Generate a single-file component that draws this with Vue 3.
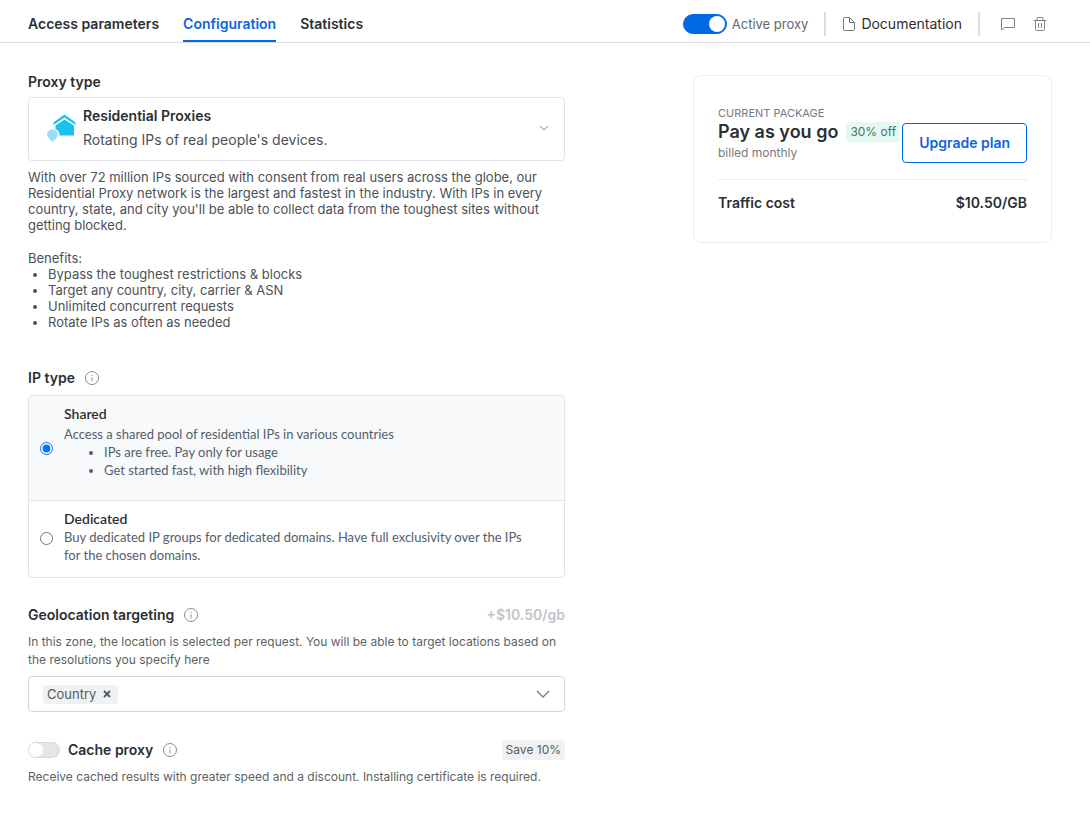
<script setup>
import { ref } from 'vue'

const tabs = ['Access parameters', 'Configuration', 'Statistics']
const activeTab = ref('Configuration')
const activeProxy = ref(true)
const cacheProxy = ref(false)
const ipType = ref('shared')
const targets = ref(['Country'])
const benefits = [
  'Bypass the toughest restrictions & blocks',
  'Target any country, city, carrier & ASN',
  'Unlimited concurrent requests',
  'Rotate IPs as often as needed',
]
const removeTarget = (name) => {
  targets.value = targets.value.filter((t) => t !== name)
}
</script>

<template>
  <div class="page">
    <header class="topbar">
      <nav class="tabs">
        <a
          v-for="tab in tabs"
          :key="tab"
          href="#"
          class="tab"
          :class="{ active: tab === activeTab }"
          @click.prevent="activeTab = tab"
        >{{ tab }}</a>
      </nav>
      <div class="tools">
        <label class="active-proxy">
          <input v-model="activeProxy" type="checkbox" role="switch" class="switch large" />
          <span>Active proxy</span>
        </label>
        <span class="divider"></span>
        <a href="#" class="docs">
          <svg width="14" height="16" viewBox="0 0 14 16" fill="none" stroke="#6f7780" stroke-linejoin="round">
            <path d="M1.5 2.5a1 1 0 0 1 1-1h5l5 5v7a1 1 0 0 1-1 1h-9a1 1 0 0 1-1-1z" />
            <path d="M7.5 1.5v5h5" />
          </svg>
          <span>Documentation</span>
        </a>
        <span class="divider"></span>
        <button type="button" class="icon-button" aria-label="Comment">
          <svg width="16" height="16" viewBox="0 0 16 16" fill="none" stroke="#7b838b" stroke-linejoin="round">
            <path d="M1.5 2.5h13v9h-10l-3 2.5z" />
          </svg>
        </button>
        <button type="button" class="icon-button" aria-label="Delete">
          <svg width="16" height="16" viewBox="0 0 16 16" fill="none" stroke="#7b838b" stroke-linecap="round" stroke-linejoin="round">
            <path d="M2 4.5h12M5 4.5v-2a1 1 0 0 1 1-1h4a1 1 0 0 1 1 1v2M3.5 4.5v9a1 1 0 0 0 1 1h7a1 1 0 0 0 1-1v-9M6.5 7.5v4M9.5 7.5v4" />
          </svg>
        </button>
      </div>
    </header>

    <main class="content">
      <div class="settings">
        <section class="proxy-type">
          <h2 id="proxy-type-title">Proxy type</h2>
          <button type="button" class="proxy-select" aria-haspopup="listbox" aria-labelledby="proxy-type-title">
            <svg class="house" width="30" height="30" viewBox="0 0 30 30">
              <path d="M6.5 9.5 17.5 1.5l11 8V12L17.5 4.5 6.5 12z" fill="#18c2ec" />
              <path d="M8.5 12.5l9-6 9.5 6v10H8.5z" fill="#18c2ec" />
              <path d="M5.5 15.5c4 0 7 2.5 7 6.5 0 3-2.5 4.5-7 9-4.5-4.5-7-6-7-9 0-4 3-6.5 7-6.5z" fill="#fff" />
              <path d="M5.5 16.5c3 0 5.500 2 5.500 5 0 2.500-2.500 4.500-5.500 7.500-3-3-5.500-5-5.500-7.500 0-3 2.500-5 5.500-5z" fill="#96dff6" />
            </svg>
            <span class="proxy-text">
              <strong>Residential Proxies</strong>
              <span>Rotating IPs of real people's devices.</span>
            </span>
            <svg width="10" height="6" viewBox="0 0 10 6" fill="none" stroke="#80868d">
              <path d="m1 1 4 4 4-4" />
            </svg>
          </button>
          <div class="description">
            <p>
              With over 72 million IPs sourced with consent from real users across the globe, our
              Residential Proxy network is the largest and fastest in the industry. With IPs in every
              country, state, and city you'll be able to collect data from the toughest sites without
              getting blocked.
            </p>
            <p class="benefits">Benefits:</p>
            <ul>
              <li v-for="item in benefits" :key="item">{{ item }}</li>
            </ul>
          </div>
        </section>

        <section class="ip-type">
          <div class="heading">
            <h2>IP type</h2>
            <svg class="info" width="14" height="14" viewBox="0 0 14 14" fill="none" stroke="#858c93">
              <circle cx="7" cy="7" r="6.5" />
              <path d="M7 6.3v4M7 3.8V5" />
            </svg>
          </div>
          <div class="options" role="radiogroup" aria-label="IP type">
            <label class="option shared" :class="{ selected: ipType === 'shared' }">
              <input v-model="ipType" type="radio" name="ip-type" value="shared" />
              <div>
                <strong>Shared</strong>
                <p>Access a shared pool of residential IPs in various countries</p>
                <ul>
                  <li>IPs are free. Pay only for usage</li>
                  <li>Get started fast, with high flexibility</li>
                </ul>
              </div>
            </label>
            <label class="option dedicated" :class="{ selected: ipType === 'dedicated' }">
              <input v-model="ipType" type="radio" name="ip-type" value="dedicated" />
              <div>
                <strong>Dedicated</strong>
                <p>Buy dedicated IP groups for dedicated domains. Have full exclusivity over the IPs for the chosen domains.</p>
              </div>
            </label>
          </div>
        </section>

        <section class="geo">
          <div class="heading">
            <h2>Geolocation targeting</h2>
            <svg class="info" width="14" height="14" viewBox="0 0 14 14" fill="none" stroke="#858c93">
              <circle cx="7" cy="7" r="6.5" />
              <path d="M7 6.3v4M7 3.8V5" />
            </svg>
            <span class="price">+$10.50/gb</span>
          </div>
          <p class="note">
            In this zone, the location is selected per request. You will be able to target locations based on
            the resolutions you specify here
          </p>
          <div class="target-select">
            <span v-for="target in targets" :key="target" class="chip">
              {{ target }}
              <button type="button" :aria-label="`Remove ${target}`" @click="removeTarget(target)">
                <svg width="8" height="8" viewBox="0 0 8 8" stroke="#545b61" stroke-width="1.8">
                  <path d="m1 1 6 6M7 1 1 7" />
                </svg>
              </button>
            </span>
            <button type="button" class="open" aria-label="Choose targeting" aria-haspopup="listbox">
              <svg width="14" height="8" viewBox="0 0 14 8" fill="none" stroke="#747c84" stroke-width="1.3">
                <path d="m1 1 6 6 6-6" />
              </svg>
            </button>
          </div>
        </section>

        <section class="cache">
          <div class="heading">
            <label class="cache-label">
              <input v-model="cacheProxy" type="checkbox" role="switch" class="switch small" />
              <span>Cache proxy</span>
            </label>
            <svg class="info" width="14" height="14" viewBox="0 0 14 14" fill="none" stroke="#858c93">
              <circle cx="7" cy="7" r="6.5" />
              <path d="M7 6.3v4M7 3.8V5" />
            </svg>
            <span class="save">Save 10%</span>
          </div>
          <p class="note">Receive cached results with greater speed and a discount. Installing certificate is required.</p>
        </section>
      </div>

      <aside class="package">
        <div class="plan">
          <div class="plan-text">
            <p class="caption">CURRENT PACKAGE</p>
            <div class="plan-name">
              <strong>Pay as you go</strong>
              <span class="discount">30% off</span>
            </div>
            <p class="billing">billed monthly</p>
          </div>
          <button type="button" class="upgrade">Upgrade plan</button>
        </div>
        <div class="cost">
          <span>Traffic cost</span>
          <span>$10.50/GB</span>
        </div>
      </aside>
    </main>
  </div>
</template>

<style>
body {
  background: #fff;
}
</style>

<style scoped>
.page,
.page * {
  box-sizing: border-box;
}

.page {
  color: #2b2f33;
  font-family: Inter, "Liberation Sans", sans-serif;
  font-size: 14px;
  line-height: 20px;
}

p,
h2,
ul {
  margin: 0;
}

button {
  font: inherit;
  color: inherit;
  padding: 0;
  border: 0;
  background: none;
  cursor: pointer;
}

a {
  color: inherit;
  text-decoration: none;
}

svg {
  display: block;
  flex: none;
}

strong,
h2 {
  font-size: 14px;
  font-weight: 600;
}

.topbar {
  display: flex;
  justify-content: space-between;
  height: 43px;
  padding: 0 42px 0 28px;
  border-bottom: 1px solid #dcdee0;
}

.tabs {
  display: flex;
  gap: 24px;
}

.tab {
  padding-top: 14px;
  border-bottom: 2px solid transparent;
  font-weight: 600;
}

.tab.active {
  color: #0b66de;
  border-color: #0068e0;
}

.tools {
  display: flex;
  align-items: center;
  padding-top: 5px;
}

.active-proxy {
  display: flex;
  align-items: center;
  gap: 5px;
  color: #5f6870;
  font-size: 13px;
}

.divider {
  width: 2px;
  height: 24px;
  margin: 0 16px;
  background: #dcdee1;
}

.docs {
  display: flex;
  align-items: center;
  gap: 5px;
}

.icon-button {
  margin-left: 16px;
}

.divider + .icon-button {
  margin-left: 4px;
}

.switch {
  appearance: none;
  display: flex;
  align-items: center;
  flex: none;
  margin: 0;
  border-radius: 10px;
  background: #e4e5e9;
  border: 1px solid #d7d9dd;
}

.switch::before {
  content: "";
  height: 100%;
  aspect-ratio: 1;
  border-radius: 50%;
  background: #fff;
}

.switch:checked {
  justify-content: flex-end;
  background: #0068e0;
  border-color: #0068e0;
}

.switch.large {
  width: 44px;
  height: 20px;
  padding: 1px;
}

.switch.small {
  width: 32px;
  height: 16px;
}

.content {
  display: grid;
  grid-template-columns: minmax(0, 1fr) 359px;
  gap: 128px;
  align-items: start;
  padding: 32px 38px 28px 28px;
}

.proxy-type h2 {
  padding-bottom: 8px;
  line-height: 14px;
}

.proxy-select {
  display: flex;
  align-items: center;
  width: 100%;
  height: 64px;
  padding: 0 15px 2px 18px;
  border: 1px solid #dfe2eb;
  border-radius: 4px;
  text-align: left;
}

.proxy-text {
  flex: 1;
  padding-left: 6px;
  color: #4b5156;
  line-height: 24px;
}

.proxy-text strong {
  color: #2b2f33;
}

.proxy-text > * {
  display: block;
}

.description {
  padding-top: 8px;
  color: #4b5156;
  font-size: 13px;
  line-height: 16px;
}

.benefits {
  padding-top: 17px;
}

.description ul {
  padding-left: 20px;
}

.ip-type {
  padding-top: 38px;
}

.heading {
  display: flex;
  align-items: center;
}

.heading .info {
  margin-left: 10px;
}

.options {
  margin-top: 7px;
  border: 1px solid #dfe2eb;
  border-radius: 4px;
  overflow: hidden;
  color: #535e6c;
  font-family: Lato, "Liberation Sans", sans-serif;
  font-size: 13px;
  line-height: 18px;
}

.option {
  display: flex;
  align-items: center;
  gap: 11px;
  padding: 9px 28px 9px 11px;
}

.option strong {
  display: block;
  color: #2b2f33;
}

.option input {
  flex: none;
  width: 13px;
  height: 13px;
  margin: 0;
  accent-color: #0075ff;
}

.option ul {
  padding: 0 0 12px 40px;
}

.shared p {
  padding-top: 2px;
}

.dedicated {
  padding-bottom: 11px;
  border-top: 1px solid #dfe2eb;
}

.dedicated p {
  padding-bottom: 2px;
}

.selected {
  background: #f8f9fb;
}

.geo {
  padding-top: 27px;
}

.price {
  margin-left: auto;
  color: #bfc5cb;
  font-weight: 600;
}

.note {
  padding-top: 8px;
  color: #5c625f;
  font-size: 12px;
  line-height: 18px;
}

.target-select {
  display: flex;
  align-items: center;
  height: 36px;
  margin-top: 7px;
  padding: 0 14px;
  border: 1px solid #d3d6da;
  border-radius: 4px;
}

.chip {
  display: flex;
  align-items: center;
  gap: 7px;
  height: 19px;
  padding: 0 7px 0 4px;
  border-radius: 4px;
  background: #f0f1f3;
  color: #545b61;
  font-size: 13px;
}

.open {
  margin-left: auto;
}

.cache {
  padding-top: 28px;
}

.cache-label {
  display: flex;
  align-items: center;
  gap: 8px;
  font-weight: 600;
}

.save,
.discount {
  height: 20px;
  padding: 0 4px;
  border-radius: 4px;
  font-size: 12px;
}

.save {
  margin-left: auto;
  background: #f0f1f3;
  color: #545b61;
}

.package {
  padding: 28px 24px;
  border: 1px solid #ebecee;
  border-radius: 8px;
}

.plan {
  display: flex;
  align-items: flex-end;
  justify-content: space-between;
  padding-bottom: 16px;
  border-bottom: 1px solid #ebecee;
}

.caption {
  color: #747b82;
  font-size: 11px;
  line-height: 18px;
}

.plan-name {
  display: flex;
  align-items: center;
  gap: 8px;
  padding-bottom: 1px;
}

.plan-name strong {
  font-size: 18px;
  white-space: nowrap;
}

.discount {
  background: #e5f8f4;
  color: #43756c;
  white-space: nowrap;
}

.billing {
  color: #747b82;
  font-size: 12px;
}

.upgrade {
  height: 40px;
  padding: 0 16px;
  border: 1px solid #0068e0;
  border-radius: 4px;
  color: #0b66de;
  font-weight: 600;
  white-space: nowrap;
}

.cost {
  display: flex;
  justify-content: space-between;
  padding: 13px 0 1px;
  font-weight: 600;
}
</style>
